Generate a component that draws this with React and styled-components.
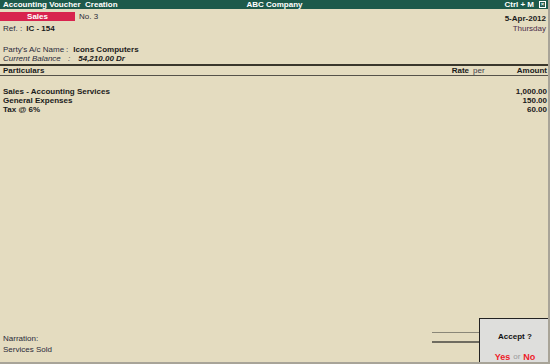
import React from "react";
import styled, { createGlobalStyle } from "styled-components";

const GlobalStyle = createGlobalStyle`
  html, body { margin: 0; padding: 0; background: #e4dcc0; }
  body { font-family: "Liberation Sans", Arial, sans-serif; font-size: 8px; color: #1a1a1a; }
`;

const Screen = styled.div`
  position: relative;
  width: 550px;
  height: 364px;
  box-sizing: border-box;
  display: flex;
  flex-direction: column;
  background: #e4dcc0;
  border-right: 2px solid #a8a498;
  border-bottom: 2px solid #a8a498;
  overflow: hidden;
`;

const TitleBar = styled.div`
  height: 9px;
  display: grid;
  grid-template-columns: 1fr auto 1fr;
  align-items: center;
  padding: 0 2px 0 3px;
  background: #1d5a4b;
  color: #fff;
  font-weight: bold;
  font-size: 8px;
  line-height: 9px;
`;

const TitleRight = styled.div`
  display: flex;
  justify-content: flex-end;
  align-items: center;
  gap: 5px;
`;

const CloseBox = styled.span`
  width: 7px;
  height: 7px;
  box-sizing: border-box;
  border: 1px solid #fff;
  display: flex;
  align-items: center;
  justify-content: center;
  font-size: 6px;
  line-height: 5px;
`;

const Header = styled.div`
  display: flex;
  justify-content: space-between;
  padding: 3px 2px 0 0;
  height: 55px;
  box-sizing: border-box;
`;

const LeftCol = styled.div`
  display: flex;
  flex-direction: column;
`;

const RightCol = styled.div`
  display: flex;
  flex-direction: column;
  align-items: flex-end;
  padding-top: 2px;
`;

const Line = styled.div`
  display: flex;
  align-items: center;
  height: 9px;
  line-height: 9px;
  padding-left: ${(p) => (p.$flush ? 0 : 3)}px;
  margin-top: ${(p) => p.$gap || 0}px;
  font-style: ${(p) => (p.$italic ? "italic" : "normal")};
`;

const SalesTag = styled.span`
  width: 75px;
  height: 9px;
  background: #d8234e;
  color: #fff;
  font-weight: bold;
  text-align: center;
  line-height: 9px;
  margin-right: 4px;
`;

const Label = styled.span`
  width: ${(p) => p.$w}px;
  color: ${(p) => p.$color || "#2a2a3a"};
`;

const Bold = styled.span`
  font-weight: bold;
  font-style: ${(p) => (p.$italic ? "italic" : "normal")};
  padding-left: ${(p) => p.$pad || 0}px;
  color: ${(p) => p.$color || "#1a1a1a"};
`;

const Plain = styled.span`
  color: ${(p) => p.$color || "#2a2a3a"};
`;

const ColumnHead = styled.div`
  display: flex;
  align-items: center;
  height: 8px;
  line-height: 8px;
  padding: 1px 1px 0 3px;
  border-top: 2px solid #3a372c;
  border-bottom: 1px solid #55524a;
  font-weight: bold;
`;

const HeadCell = styled.span`
  flex: ${(p) => (p.$grow ? 1 : "none")};
  width: ${(p) => (p.$w ? p.$w + "px" : "auto")};
  padding-left: ${(p) => p.$pad || 0}px;
  text-align: ${(p) => p.$align || "left"};
  font-weight: ${(p) => (p.$light ? "normal" : "bold")};
  color: ${(p) => (p.$light ? "#3a3a4a" : "#1a1a1a")};
`;

const Entries = styled.div`
  display: flex;
  flex-direction: column;
  padding: 11px 1px 0 3px;
  flex: 1;
`;

const Entry = styled.div`
  display: flex;
  justify-content: space-between;
  height: 9px;
  line-height: 9px;
  font-weight: bold;
`;

const Footer = styled.div`
  display: flex;
  align-items: flex-end;
  justify-content: space-between;
  padding: 0 0 8px 3px;
`;

const Narration = styled.div`
  display: flex;
  flex-direction: column;
  gap: 2px;
  color: #2a2a3a;
  line-height: 9px;
`;

const Totals = styled.div`
  display: flex;
  flex-direction: column;
  gap: 8px;
  width: 48px;
  margin-right: 68px;
  margin-bottom: 11px;
`;

const Rule = styled.div`
  height: ${(p) => p.$h}px;
  background: ${(p) => p.$color};
`;

const AcceptBox = styled.div`
  position: absolute;
  left: 479px;
  top: 318px;
  width: 72px;
  height: 48px;
  box-sizing: border-box;
  background: #dededc;
  border: 1px solid #222;
  display: flex;
  flex-direction: column;
  align-items: center;
  padding-top: 13px;
`;

const AcceptTitle = styled.div`
  font-weight: bold;
  font-size: 8px;
  color: #111;
`;

const Choice = styled.div`
  margin-top: 11px;
  font-weight: bold;
  font-size: 9px;
  color: #ee1c2a;
  display: flex;
  gap: 3px;
`;

const Or = styled.span`
  font-weight: normal;
  font-size: 8px;
  color: #9a9a9a;
`;

export default function App() {
  const entries = [
    ["Sales - Accounting Services", "1,000.00"],
    ["General Expenses", "150.00"],
    ["Tax @ 6%", "60.00"],
  ];

  return (
    <Screen>
      <GlobalStyle />
      <TitleBar>
        <span>Accounting Voucher&nbsp; Creation</span>
        <span>ABC Company</span>
        <TitleRight>
          <span>Ctrl + M</span>
          <CloseBox>×</CloseBox>
        </TitleRight>
      </TitleBar>

      <Header>
        <LeftCol>
          <Line $flush>
            <SalesTag>Sales</SalesTag>
            <Plain>No. 3</Plain>
          </Line>
          <Line $gap={3}>
            <Label $w={17}>Ref.</Label>
            <Plain>:</Plain>
            <Bold $pad={4}>IC - 154</Bold>
          </Line>
          <Line $gap={12}>
            <Label $w={63}>Party's A/c Name</Label>
            <Plain>:</Plain>
            <Bold $pad={5}>Icons Computers</Bold>
          </Line>
          <Line $italic>
            <Label $w={65}>Current Balance</Label>
            <Plain>:</Plain>
            <Bold $italic $pad={8}>54,210.00 Dr</Bold>
          </Line>
        </LeftCol>
        <RightCol>
          <Line $flush>
            <Bold>5-Apr-2012</Bold>
          </Line>
          <Line $flush $gap={1}>
            <Plain $color="#4a2a4a">Thursday</Plain>
          </Line>
        </RightCol>
      </Header>

      <ColumnHead>
        <HeadCell $grow>Particulars</HeadCell>
        <HeadCell>Rate</HeadCell>
        <HeadCell $light $w={34} $pad={4}>per</HeadCell>
        <HeadCell $w={40} $align="right">Amount</HeadCell>
      </ColumnHead>

      <Entries>
        {entries.map(([name, amt]) => (
          <Entry key={name}>
            <span>{name}</span>
            <span>{amt}</span>
          </Entry>
        ))}
      </Entries>

      <Footer>
        <Narration>
          <span>Narration:</span>
          <span>Services Sold</span>
        </Narration>
        <Totals>
          <Rule $h={1} $color="#8a8778" />
          <Rule $h={2} $color="#6f6c60" />
        </Totals>
      </Footer>

      <AcceptBox>
        <AcceptTitle>Accept ?</AcceptTitle>
        <Choice>
          <span>Yes</span>
          <Or>or</Or>
          <span>No</span>
        </Choice>
      </AcceptBox>
    </Screen>
  );
}
